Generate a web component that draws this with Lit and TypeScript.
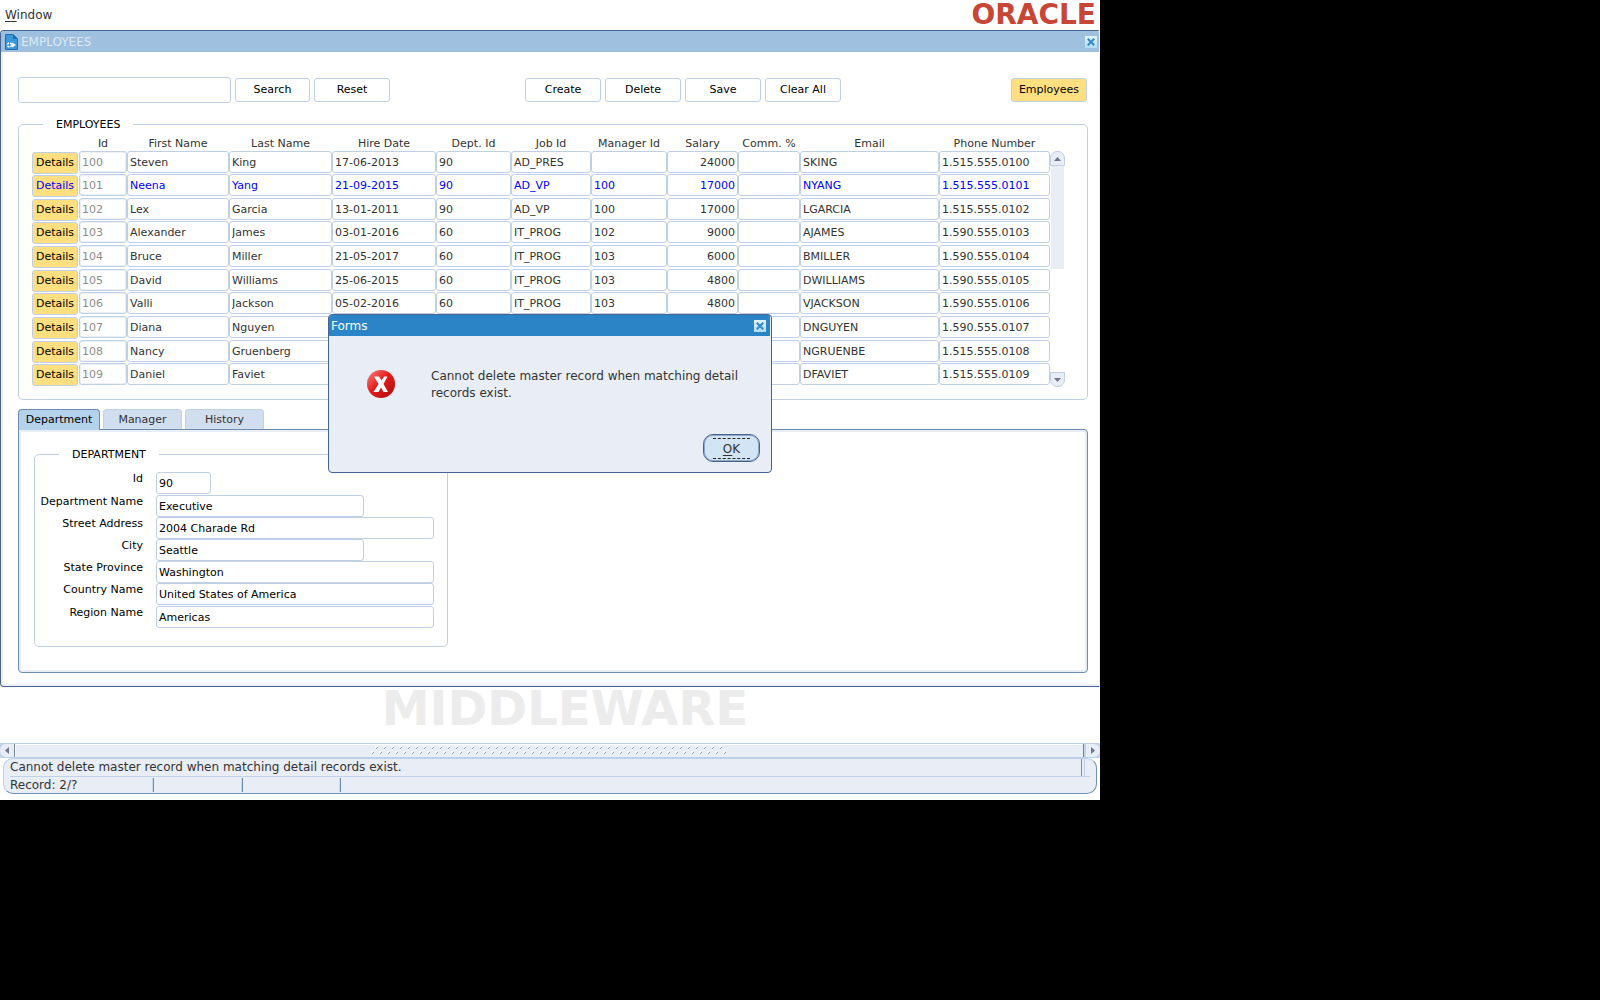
import { LitElement, html, css, svg } from "lit";
import { customElement, state } from "lit/decorators.js";
import { classMap } from "lit/directives/class-map.js";

interface Column {
  key: string;
  label: string;
  kind?: string;
}

const COLUMNS: Column[] = [
  { key: "id", label: "Id", kind: "locked" },
  { key: "first", label: "First Name" },
  { key: "last", label: "Last Name" },
  { key: "hired", label: "Hire Date" },
  { key: "dept", label: "Dept. Id" },
  { key: "job", label: "Job Id" },
  { key: "manager", label: "Manager Id" },
  { key: "salary", label: "Salary", kind: "number" },
  { key: "comm", label: "Comm. %" },
  { key: "email", label: "Email" },
  { key: "phone", label: "Phone Number" },
];

const EMPLOYEES: string[][] = [
  ["100", "Steven", "King", "17-06-2013", "90", "AD_PRES", "", "24000", "", "SKING", "1.515.555.0100"],
  ["101", "Neena", "Yang", "21-09-2015", "90", "AD_VP", "100", "17000", "", "NYANG", "1.515.555.0101"],
  ["102", "Lex", "Garcia", "13-01-2011", "90", "AD_VP", "100", "17000", "", "LGARCIA", "1.515.555.0102"],
  ["103", "Alexander", "James", "03-01-2016", "60", "IT_PROG", "102", "9000", "", "AJAMES", "1.590.555.0103"],
  ["104", "Bruce", "Miller", "21-05-2017", "60", "IT_PROG", "103", "6000", "", "BMILLER", "1.590.555.0104"],
  ["105", "David", "Williams", "25-06-2015", "60", "IT_PROG", "103", "4800", "", "DWILLIAMS", "1.590.555.0105"],
  ["106", "Valli", "Jackson", "05-02-2016", "60", "IT_PROG", "103", "4800", "", "VJACKSON", "1.590.555.0106"],
  ["107", "Diana", "Nguyen", "", "", "", "", "", "", "DNGUYEN", "1.590.555.0107"],
  ["108", "Nancy", "Gruenberg", "", "", "", "", "", "", "NGRUENBE", "1.515.555.0108"],
  ["109", "Daniel", "Faviet", "", "", "", "", "", "", "DFAVIET", "1.515.555.0109"],
];

const DEPARTMENT = [
  { id: "dep-id", label: "Id", value: "90", size: "small" },
  { id: "dep-name", label: "Department Name", value: "Executive", size: "medium" },
  { id: "dep-street", label: "Street Address", value: "2004 Charade Rd", size: "large" },
  { id: "dep-city", label: "City", value: "Seattle", size: "medium" },
  { id: "dep-state", label: "State Province", value: "Washington", size: "large" },
  { id: "dep-country", label: "Country Name", value: "United States of America", size: "large" },
  { id: "dep-region", label: "Region Name", value: "Americas", size: "large" },
];

const MESSAGE = "Cannot delete master record when matching detail records exist.";

const closeMark = svg`<path d="M3.500 3.500L8.500 8.500M8.500 3.500L3.500 8.500" stroke="#2f8acb" stroke-width="2" stroke-linecap="square"/>`;

@customElement("app-root")
export class AppRoot extends LitElement {
  @state() private tab = "Department";
  @state() private current = 1;

  static styles = css`
    :host {
      display: block;
      min-height: 100vh;
      background: #000;
      color: #333;
      font: 11px/14px "DejaVu Sans", sans-serif;
    }
    * {
      box-sizing: border-box;
    }
    button,
    input {
      margin: 0;
      font: inherit;
      color: #000;
      outline: none;
      border-radius: 3px;
      border: 1px solid #bfd0e6;
      background: #fff;
    }
    button {
      padding: 0;
    }
    svg {
      display: block;
    }
    .app {
      position: relative;
      max-width: 1100px;
      padding-bottom: 6px;
      background: #fff;
    }
    .menubar {
      display: flex;
      justify-content: space-between;
      align-items: center;
      height: 30px;
      padding: 0 4px 0 5px;
      font-size: 12px;
    }
    .menubar a {
      color: inherit;
      text-decoration: none;
    }
    u {
      text-underline-offset: 2px;
    }
    .brand {
      font-size: 28px;
      font-weight: bold;
      line-height: 30px;
      color: #c74634;
    }
    .window {
      border: 1px solid #46648f;
      border-right-color: #e8edf5;
      border-radius: 4px 2px 0 4px;
      box-shadow: inset 2px -2px 0 #eef2f7;
    }
    .titlebar {
      display: flex;
      align-items: center;
      gap: 3px;
      height: 21px;
      padding: 0 2px 0 4px;
      background: #9fc0df;
      color: #dce8f4;
      font-size: 12px;
      border-radius: 3px 2px 0 0;
    }
    .titlebar span {
      flex: 1;
    }
    .close {
      width: 12px;
      height: 12px;
      border: 0;
      border-radius: 0;
      background: linear-gradient(#e2f2fc, #b0dcf5);
    }
    .content {
      padding: 25px 11px 13px 17px;
    }
    .toolbar {
      display: flex;
      align-items: center;
      gap: 4px;
      height: 26px;
      margin-bottom: 14px;
      padding-right: 1px;
    }
    .toolbar button {
      width: 76px;
      height: 24px;
    }
    .toolbar .search {
      width: 75px;
    }
    .query {
      width: 213px;
      height: 26px;
      padding: 0 2px;
    }
    .actions {
      display: flex;
      gap: 4px;
      margin: 0 auto 0 131px;
    }
    .toolbar .accent,
    .details {
      background: #ffdf80;
    }
    fieldset {
      min-width: 0;
      margin: 0;
      padding: 0;
      border: 1px solid #bfd0e6;
      border-radius: 5px;
    }
    legend {
      margin-left: 24px;
      padding: 0 13px;
      line-height: 15px;
      color: #000;
    }
    .employees {
      margin-bottom: 9px;
    }
    .grid {
      display: flex;
      padding: 0 22px 12px 13px;
    }
    table {
      flex: 1;
      border-spacing: 0;
      table-layout: fixed;
      width: 100%;
    }
    th,
    td {
      padding: 0;
      vertical-align: top;
    }
    th {
      height: 19px;
      padding-top: 5px;
      font-weight: normal;
    }
    .col-action { width: 47px; }
    .col-id { width: 48px; }
    .col-first { width: 102px; }
    .col-last { width: 103px; }
    .col-hired { width: 104px; }
    .col-dept { width: 75px; }
    .col-job { width: 80px; }
    .col-manager { width: 76px; }
    .col-salary { width: 71px; }
    .col-comm { width: 62px; }
    .col-phone { width: 111px; }
    tbody tr {
      height: 24px;
    }
    tbody tr:first-child,
    tbody tr:nth-child(3n) {
      height: 23px;
    }
    td input {
      display: block;
      width: 100%;
      height: 22px;
      padding: 0 2px;
      color: #333;
    }
    td .locked {
      color: #8c8c8c;
      box-shadow: inset 0 0 0 1px #edf1f7;
    }
    td .number {
      text-align: right;
    }
    .details {
      display: block;
      width: 46px;
      height: 22px;
      margin-top: 1px;
    }
    .current input:not(.locked),
    .current .details {
      color: #00f;
    }
    .vscroll {
      display: flex;
      flex-direction: column;
      width: 15px;
      margin: 19px 0 0;
    }
    .vscroll button {
      display: grid;
      place-items: center;
      width: 15px;
      height: 15px;
      background: #e8edf6;
    }
    .up {
      border-radius: 7px 7px 0 0;
    }
    .down {
      border-radius: 0 0 7px 7px;
    }
    .track {
      flex: 1;
      margin: 0 1px;
      background: linear-gradient(#e8edf6, #e8edf6) no-repeat 0 0 / 100% 50%;
    }
    .tabs {
      display: flex;
      gap: 3px;
      height: 20px;
    }
    .tab {
      width: 79px;
      border-color: #bfd0e6;
      border-bottom: 0;
      border-radius: 4px 4px 0 0;
      background: #d1deee;
      color: #333;
    }
    .tab.active {
      width: 82px;
      height: 21px;
      z-index: 1;
      border-color: #6c8cb0;
      background: #b4d2ec;
      color: #000;
    }
    .panel {
      padding: 17px 15px 25px;
      border: 1px solid #6c8cb0;
      border-radius: 0 4px 4px 4px;
      box-shadow: inset 0 0 0 2px #e9eef5;
    }
    .department {
      width: fit-content;
      padding: 10px 13px 18px 0;
    }
    .field {
      display: grid;
      grid-template-columns: 108px 278px;
      column-gap: 13px;
      height: 22px;
      color: #000;
    }
    .field:nth-of-type(5n + 1) {
      height: 23px;
    }
    .field label {
      text-align: right;
      white-space: nowrap;
    }
    .field input {
      height: 22px;
      padding: 0 2px;
    }
    .small {
      width: 55px;
    }
    .medium {
      width: 208px;
    }
    .large {
      width: 278px;
    }
    .watermark {
      height: 56px;
      padding-left: 30px;
      text-align: center;
      font-weight: bold;
      font-size: 48px;
      line-height: 42px;
      color: #ececec;
    }
    .hscroll {
      display: flex;
      height: 15px;
      border-top: 1px solid #bfd0e6;
      border-bottom: 1px solid #bcd0e8;
      background: #c3d4ea;
    }
    .hscroll button {
      display: grid;
      place-items: center;
      width: 14px;
      border: 0;
      background: #e8edf6;
    }
    .left {
      border-radius: 7px 0 0 7px;
    }
    .right {
      border-radius: 0 7px 7px 0;
    }
    .thumb {
      flex: 1;
      display: grid;
      place-items: center;
      margin-right: 2px;
      border: solid #75839c;
      border-width: 0 1px;
      background: #e8edf6;
      box-shadow: inset 1px 1px 0 #fff;
    }
    .status {
      margin: 0 3px;
      height: 36px;
      padding: 0 6px;
      border: 1px solid #7391b3;
      border-top-color: #bcd0e8;
      border-left-color: #bcd0e8;
      border-radius: 10px;
      background: #e8edf6;
      font-size: 12px;
      line-height: 17px;
    }
    .line {
      display: flex;
      height: 17px;
    }
    .line:first-child {
      height: 18px;
      border-bottom: 1px solid #bfd2ea;
      justify-content: space-between;
    }
    .line:first-child::after {
      content: "";
      width: 3px;
      margin-right: 5px;
      border: solid #7391b3;
      border-width: 0 0 0 1px;
      box-shadow: inset -1px 0 0 #bfd2ea;
    }
    .cell {
      margin: 1px 0 2px;
      border-right: 1px solid #6c8cb0;
      box-shadow: inset -1px 0 0 #c9d8ea;
      line-height: 14px;
    }
    .cell:nth-child(1) { width: 144px; }
    .cell:nth-child(2) { width: 89px; }
    .cell:nth-child(3) { width: 98px; }
    dialog {
      position: absolute;
      top: 314px;
      left: 0;
      right: 0;
      width: 444px;
      margin: 0 auto;
      padding: 0;
      border: 1px solid #46648f;
      border-radius: 4px;
      overflow: hidden;
      background: #e9eef6;
      color: #333;
      font-size: 12px;
      z-index: 2;
    }
    .dialog-title {
      display: flex;
      justify-content: space-between;
      align-items: center;
      height: 21px;
      padding: 0 4px 0 2px;
      margin-right: 1px;
      background: #2b84c6;
      color: #fff;
    }
    .alert {
      display: flex;
      gap: 36px;
      padding: 32px 13px 32px 38px;
    }
    .alert svg {
      flex: none;
      margin-top: 2px;
    }
    .alert p {
      margin: 0;
      line-height: 17px;
    }
    .ok {
      display: block;
      width: 57px;
      height: 28px;
      margin: 0 11px 10px auto;
      border: 1px solid #46648f;
      border-radius: 10px;
      box-shadow: inset 0 0 0 1px #8fa9c6;
      background: #d3e4f4;
      color: #333;
    }
    .ok span {
      display: block;
      margin: 0 9px;
      padding: 3px 0 2px;
      border: dashed #222;
      border-width: 1px 0;
    }
  `;

  private renderRow(row: string[], index: number) {
    return html`<tr class=${classMap({ current: index === this.current })} @click=${() => (this.current = index)}>
      <td><button class="details">Details</button></td>
      ${COLUMNS.map(
        (c, i) => html`<td>
          <input
            class=${c.kind ?? ""}
            aria-label="${c.label} ${row[0]}"
            .value=${row[i]}
            ?readonly=${c.kind === "locked"}
          />
        </td>`
      )}
    </tr>`;
  }

  render() {
    return html`<main class="app">
      <nav class="menubar">
        <a href="#window"><u>W</u>indow</a>
        <div class="brand">ORACLE</div>
      </nav>

      <section class="window">
        <header class="titlebar">
          <svg width="13" height="16" viewBox="0 0 13 16">
            <path d="M.5 .5H8L12.500 5V15.500H.5Z" fill="#3a97d8" stroke="#1f6faf" />
            <path d="M8 0V5H13Z" fill="#1f6faf" />
            <path d="M7 8.500V13.500L11 11Z" fill="#fff" />
            <circle cx="4.500" cy="11" r="2" fill="none" stroke="#fff" stroke-width="1.500" stroke-dasharray="2 1" />
          </svg>
          <span>EMPLOYEES</span>
          <button class="close" aria-label="Close window"><svg width="12" height="12">${closeMark}</svg></button>
        </header>

        <div class="content">
          <div class="toolbar">
            <input class="query" aria-label="Search employees" />
            <button class="search">Search</button>
            <button>Reset</button>
            <div class="actions">
              <button>Create</button>
              <button>Delete</button>
              <button>Save</button>
              <button>Clear All</button>
            </div>
            <button class="accent">Employees</button>
          </div>

          <fieldset class="employees">
            <legend>EMPLOYEES</legend>
            <div class="grid">
              <table>
                <colgroup>
                  <col class="col-action" />
                  ${COLUMNS.map((c) => html`<col class="col-${c.key}" />`)}
                </colgroup>
                <thead>
                  <tr>
                    <th></th>
                    ${COLUMNS.map((c) => html`<th scope="col">${c.label}</th>`)}
                  </tr>
                </thead>
                <tbody>
                  ${EMPLOYEES.map((row, i) => this.renderRow(row, i))}
                </tbody>
              </table>
              <div class="vscroll">
                <button class="up" aria-label="Scroll up">
                  <svg width="7" height="4"><path d="M0 4L3.500 0L7 4Z" fill="#70748c" /></svg>
                </button>
                <div class="track"></div>
                <button class="down" aria-label="Scroll down">
                  <svg width="7" height="4"><path d="M0 0L3.500 4L7 0Z" fill="#70748c" /></svg>
                </button>
              </div>
            </div>
          </fieldset>

          <div class="tabs" role="tablist">
            ${["Department", "Manager", "History"].map(
              (name) => html`<button
                role="tab"
                class=${classMap({ tab: true, active: name === this.tab })}
                aria-selected=${name === this.tab}
                @click=${() => (this.tab = name)}
              >
                ${name}
              </button>`
            )}
          </div>
          <div class="panel">
            <fieldset class="department">
              <legend>DEPARTMENT</legend>
              ${DEPARTMENT.map(
                (f) => html`<div class="field">
                  <label for=${f.id}>${f.label}</label>
                  <input id=${f.id} class=${f.size} .value=${f.value} />
                </div>`
              )}
            </fieldset>
          </div>
        </div>
      </section>

      <div class="watermark">MIDDLEWARE</div>

      <div class="hscroll">
        <button class="left" aria-label="Scroll left">
          <svg width="4" height="7"><path d="M4 0L0 3.500L4 7Z" fill="#70748c" /></svg>
        </button>
        <div class="thumb">
          <svg width="356" height="9">
            <defs>
              <pattern id="grip" width="8" height="9" patternUnits="userSpaceOnUse">
                <path d="M4 0H6V1H5V2H4Z M0 5H2V6H1V7H0Z" fill="#fff" />
                <path d="M5 2H6V1H7V2H6V3H5Z M1 7H2V6H3V7H2V8H1Z" fill="#8fa8c8" />
              </pattern>
            </defs>
            <rect width="356" height="9" fill="url(#grip)" />
          </svg>
        </div>
        <button class="right" aria-label="Scroll right">
          <svg width="4" height="7"><path d="M0 0L4 3.500L0 7Z" fill="#70748c" /></svg>
        </button>
      </div>

      <footer class="status">
        <div class="line">${MESSAGE}</div>
        <div class="line">
          <div class="cell">Record: 2/?</div>
          <div class="cell"></div>
          <div class="cell"></div>
        </div>
      </footer>

      <dialog open aria-labelledby="alert-title">
        <div class="dialog-title">
          <span id="alert-title">Forms</span>
          <button class="close" aria-label="Close dialog"><svg width="12" height="12">${closeMark}</svg></button>
        </div>
        <div class="alert">
          <svg width="28" height="28" viewBox="0 0 28 28">
            <defs>
              <linearGradient id="ball" x1="0" y1="0" x2="1" y2="1">
                <stop offset="0" stop-color="#f58a8a" />
                <stop offset=".45" stop-color="#e81c1c" />
                <stop offset="1" stop-color="#a80c0c" />
              </linearGradient>
            </defs>
            <circle cx="14" cy="14" r="14" fill="url(#ball)" />
            <path d="M7 6.500H12L14.500 10.500L17 6.500H20.500L16.500 14L21 22H16.500L14 17.500L11.500 22H6.500L11.500 14Z" fill="#fff" />
          </svg>
          <p>${MESSAGE}</p>
        </div>
        <button class="ok"><span><u>O</u>K</span></button>
      </dialog>
    </main>`;
  }
}
